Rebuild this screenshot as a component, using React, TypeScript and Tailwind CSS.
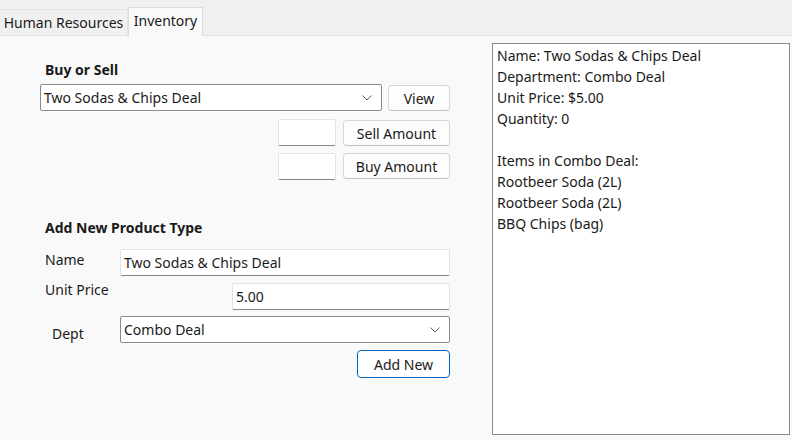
import React from "react";

const font = { fontFamily: '"Noto Sans", "Open Sans", sans-serif' };

function Chevron() {
  return (
    <svg width="10" height="6" viewBox="0 0 10 6" className="shrink-0">
      <path d="M0.5 0.5 L5 5 L9.5 0.5" fill="none" stroke="#5f5f5f" strokeWidth="1" />
    </svg>
  );
}

function Combo({ value, className }: { value: string; className: string }) {
  return (
    <div
      className={`flex items-center justify-between bg-white border border-[#8a8a8a] rounded-[2px] pl-[3px] pr-[9px] ${className}`}
    >
      <span>{value}</span>
      <Chevron />
    </div>
  );
}

function TextBox({ value, className }: { value?: string; className: string }) {
  return (
    <div
      className={`flex items-center bg-white border border-[#e3e3e3] border-b-[#858585] rounded-[2px] pl-[3px] ${className}`}
    >
      {value}
    </div>
  );
}

function Btn({ label, className }: { label: string; className: string }) {
  return (
    <div
      className={`flex items-center justify-center bg-[#fdfdfd] border border-[#d6d6d6] border-b-[#c2c2c2] rounded-[4px] ${className}`}
    >
      {label}
    </div>
  );
}

export default function App() {
  const details = [
    "Name: Two Sodas & Chips Deal",
    "Department: Combo Deal",
    "Unit Price: $5.00",
    "Quantity: 0",
    "",
    "Items in Combo Deal:",
    "Rootbeer Soda (2L)",
    "Rootbeer Soda (2L)",
    "BBQ Chips (bag)",
  ];

  return (
    <div
      style={font}
      className="w-[792px] h-[440px] bg-[#f9f9f9] text-[14px] text-[#1a1a1a] flex flex-col overflow-hidden"
    >
      {/* tab strip */}
      <div className="h-[36px] bg-[#f0f0f0] border-b border-[#e2e2e2] flex items-end shrink-0">
        <div className="h-[26px] w-[128px] bg-[#f0f0f0] border-t border-r border-[#e2e2e2] flex items-center justify-center">
          Human Resources
        </div>
        <div className="h-[29px] w-[75px] bg-[#f9f9f9] border border-b-0 border-[#dcdcdc] -mb-px flex items-center justify-center pb-[3px]">
          Inventory
        </div>
      </div>

      <div className="flex flex-1 min-h-0">
        {/* left form */}
        <div className="w-[452px] pl-[40px] pt-[24px] flex flex-col">
          <div className="pl-[5px] h-[20px] leading-[20px] font-bold">Buy or Sell</div>
          <div className="flex mt-[4px] h-[27px]">
            <Combo value="Two Sodas & Chips Deal" className="w-[342px] h-[27px]" />
            <Btn label="View" className="ml-[6px] mt-px w-[62px] h-[26px]" />
          </div>
          <div className="flex justify-end pr-[2px] mt-[8px]">
            <TextBox className="w-[58px] h-[27px]" />
            <Btn label="Sell Amount" className="ml-[7px] mt-px w-[107px] h-[26px]" />
          </div>
          <div className="flex justify-end pr-[2px] mt-[7px]">
            <TextBox className="w-[58px] h-[27px]" />
            <Btn label="Buy Amount" className="ml-[7px] w-[107px] h-[26px]" />
          </div>

          <div className="pl-[5px] h-[20px] leading-[20px] font-bold mt-[38px]">Add New Product Type</div>

          <div className="flex mt-[11px] h-[27px]">
            <div className="w-[80px] pl-[5px] leading-[20px] pt-[1px]">Name</div>
            <TextBox value="Two Sodas & Chips Deal" className="w-[330px] h-[27px]" />
          </div>
          <div className="flex mt-[7px] h-[27px]">
            <div className="w-[80px] pl-[5px] leading-[20px] -mt-[3px]">Unit Price</div>
            <TextBox value="5.00" className="ml-[112px] w-[218px] h-[27px]" />
          </div>
          <div className="flex mt-[6px] h-[27px]">
            <div className="w-[80px] pl-[12px] leading-[20px] pt-[8px]">Dept</div>
            <Combo value="Combo Deal" className="w-[330px] h-[27px]" />
          </div>
          <div className="flex justify-end pr-[2px] mt-[7px]">
            <div className="w-[93px] h-[28px] bg-white border border-[#0067c0] rounded-[4px] flex items-center justify-center">
              Add New
            </div>
          </div>
        </div>

        {/* details panel */}
        <div className="pl-[40px] pt-[7px]">
          <div className="w-[298px] h-[392px] bg-white border border-[#858b96] pl-[4px] pt-[1px]">
            {details.map((line, i) => (
              <div key={i} className="h-[21px] leading-[21px]">
                {line}
              </div>
            ))}
          </div>
        </div>
      </div>
    </div>
  );
}
